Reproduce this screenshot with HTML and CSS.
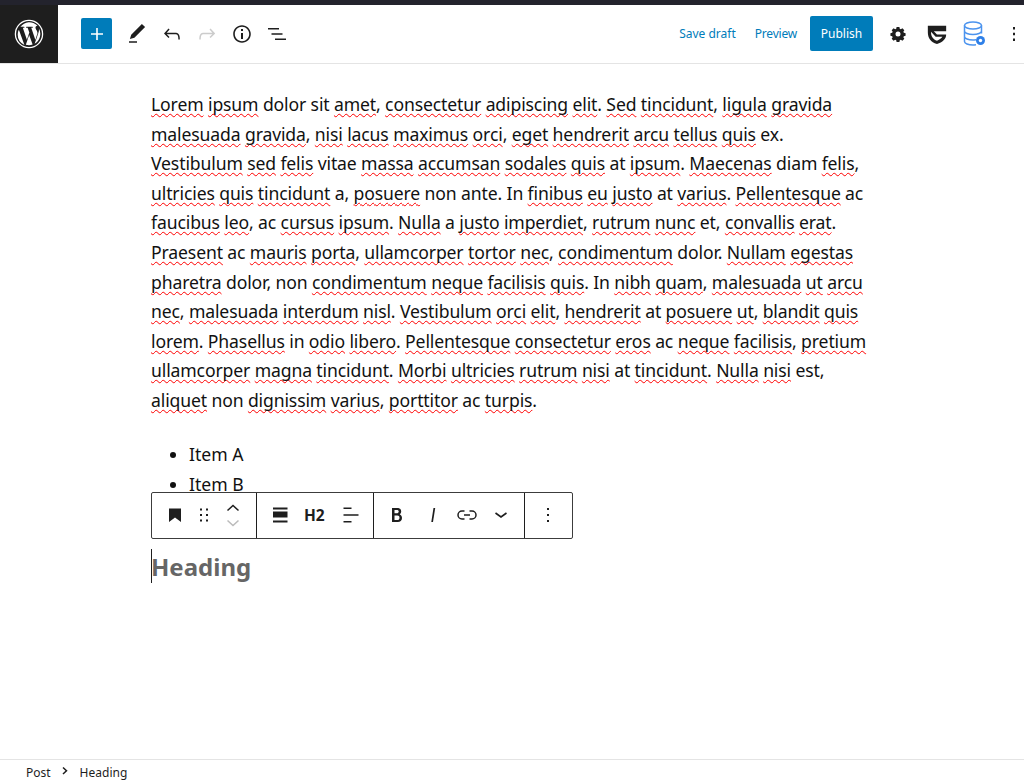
FILE: index.html
```html
<!DOCTYPE html>
<html lang="en">
<head>
<meta charset="utf-8">
<title>Edit Post</title>
<link rel="stylesheet" href="styles.css">
</head>
<body>
<div class="app">
  <div class="topstrip"></div>
  <header class="header">
    <div class="wp-logo">
      <svg width="30" height="30" viewBox="0 0 80 80"><path fill="#fff" d="M40 2a38 38 0 1 0 0 76 38 38 0 0 0 0-76zm0 3.500a34.500 34.500 0 1 1 0 69 34.500 34.500 0 0 1 0-69zM13 28.500 27.800 69A30 30 0 0 1 10 40c0-4 1-8 3-11.500zM62.500 38c0-3.500-1.300-6-2.400-7.900-1.400-2.400-2.800-4.400-2.800-6.800 0-2.700 2-5.100 4.900-5.100h.4A30 30 0 0 0 16.800 21l1.900-.1c3.100 0 8-.4 8-.4 1.600-.1 1.800 2.300.2 2.500l-3.400.3 10.900 32.200 6.500-19.500-4.600-12.700-3.200-.3c-1.600-.1-1.400-2.600.2-2.500 0 0 4.900.4 7.900.4 3.100 0 8-.4 8-.4 1.600-.1 1.800 2.300.2 2.500l-3.400.3L57 55.900l3-10c1.300-3.200 2.500-5.700 2.500-7.900zM40.500 42.400l-9 26.200a30 30 0 0 0 18.400-.5l-.2-.4zM66.400 25.300c.1 1 .2 2 .2 3.100 0 3-.6 6.400-2.300 10.700L55 65.900A30 30 0 0 0 66.400 25.300z"/></svg>
    </div>
    <div class="tools-left">
      <button class="add-btn" aria-label="Add block">
        <svg width="24" height="24" viewBox="0 0 24 24"><path fill="#fff" d="M18 11.200h-5.200V6h-1.600v5.200H6v1.600h5.200V18h1.600v-5.200H18z"/></svg>
      </button>
      <svg class="tool" width="24" height="24" viewBox="0 0 24 24"><path fill="#1e1e1e" d="M20.100 5.100 16.900 2 6.200 12.700l-1.300 4.400 4.500-1.300L20.100 5.100zM4 20.800h8v-1.500H4v1.500z"/></svg>
      <svg class="tool" width="24" height="24" viewBox="0 0 24 24"><path fill="#1e1e1e" d="M18.300 11.700c-.6-.6-1.400-.9-2.300-.9H6.700l2.900-3.300-1.100-1-4.500 5L8.500 16l1-1-2.700-2.700H16c.5 0 .9.200 1.300.5 1 1 1 3.400 1 4.500v.3h1.500v-.2c0-1.500 0-4.300-1.500-5.700z"/></svg>
      <svg class="tool" width="24" height="24" viewBox="0 0 24 24"><path fill="#ccc" d="M15.600 6.500l-1.100 1 2.900 3.300H8c-.9 0-1.700.3-2.300.9-1.400 1.500-1.400 4.200-1.400 5.600v.2h1.500v-.3c0-1.100 0-3.500 1-4.500.3-.3.700-.5 1.300-.5h9.200L14.500 15l1.100 1.100 4.600-4.600-4.600-5z"/></svg>
      <svg class="tool" width="24" height="24" viewBox="0 0 24 24"><path fill="#1e1e1e" d="M12 3.200c-4.800 0-8.800 3.900-8.800 8.800 0 4.800 3.900 8.800 8.800 8.800 4.800 0 8.800-3.900 8.800-8.800 0-4.800-4-8.800-8.800-8.800zm0 16c-4 0-7.200-3.300-7.200-7.200C4.800 8 8 4.800 12 4.800s7.200 3.300 7.200 7.200c0 4-3.200 7.200-7.200 7.200zM11 17h2v-6h-2v6zm0-8h2V7h-2v2z"/></svg>
      <svg class="tool" width="24" height="24" viewBox="0 0 24 24"><path fill="#1e1e1e" d="M3 6h11v1.500H3V6zm3.500 5.200h11v1.500h-11v-1.500zM10 16.500h11V18H10v-1.500z"/></svg>
    </div>
    <div class="tools-right">
      <a class="link save">Save draft</a>
      <a class="link preview">Preview</a>
      <button class="publish">Publish</button>
      <svg class="tool gear" width="20" height="20" viewBox="0 0 24 24"><path fill="#1e1e1e" fill-rule="evenodd" d="M10.300 4.500h3.400l.4 2.100 1.300.6 1.900-1.200 2.300 2.400-1.200 1.800.6 1.400 2.100.4v3.200l-2.100.4-.6 1.400 1.200 1.800-2.300 2.400-1.900-1.200-1.300.6-.4 2.100h-3.400l-.4-2.100-1.300-.6-1.900 1.200-2.300-2.400 1.200-1.800-.6-1.400-2.100-.4v-3.200l2.100-.4.600-1.400-1.200-1.800 2.300-2.400 1.900 1.200 1.300-.6zM12 10a3 3 0 1 0 0 6 3 3 0 0 0 0-6z" transform="translate(0 -1)"/></svg>
      <svg class="tool guard" width="22" height="22" viewBox="0 0 24 24"><path fill="#1e1e1e" d="M2 3h20v6H8.500l3.500 3.500h10c0 5-4 8.500-10 10.500C5 21 2 16 2 10V3zm3.500 3v4.500c0 3.800 2.300 7.300 6.500 8.800 3-1.100 5-2.800 5.900-4.300H10.500L5.500 9.500V6z"/></svg>
      <svg class="tool db" width="26" height="28" viewBox="0 0 26 28"><g fill="none" stroke="#4b93ee" stroke-width="1.500"><ellipse cx="11" cy="5.500" rx="8.500" ry="3.500"/><path d="M2.500 5.500v16c0 2 3.800 3.500 8.500 3.500 1 0 2-.1 3-.2M19.500 5.500v8M2.500 11c0 2 3.800 3.500 8.500 3.500s8.500-1.500 8.500-3.500M2.500 16.500c0 2 3.800 3.500 8.500 3.500 1 0 2-.1 3-.2"/></g><circle cx="18.500" cy="20.500" r="4.500" fill="#2f80e8"/><circle cx="18.500" cy="20.500" r="1.700" fill="#fff"/></svg>
      <svg class="tool more" width="20" height="24" viewBox="2 0 20 24"><path fill="#1e1e1e" d="M11 5h2v2.500h-2zM11 10.700h2v2.500h-2zM11 16.500h2V19h-2z"/></svg>
    </div>
  </header>

  <main class="canvas">
    <div class="column">
      <p class="para"><span class="sp">Lorem</span> <span class="sp">ipsum</span> dolor sit <span class="sp">amet</span>, <span class="sp">consectetur</span> <span class="sp">adipiscing</span> <span class="sp">elit</span>. <span class="sp">Sed</span> <span class="sp">tincidunt</span>, <span class="sp">ligula</span> <span class="sp">gravida</span><br>
<span class="sp">malesuada</span> <span class="sp">gravida</span>, <span class="sp">nisi</span> <span class="sp">lacus</span> <span class="sp">maximus</span> <span class="sp">orci</span>, <span class="sp">eget</span> <span class="sp">hendrerit</span> <span class="sp">arcu</span> <span class="sp">tellus</span> <span class="sp">quis</span> ex.<br>
<span class="sp">Vestibulum</span> <span class="sp">sed</span> <span class="sp">felis</span> vitae <span class="sp">massa</span> <span class="sp">accumsan</span> <span class="sp">sodales</span> <span class="sp">quis</span> at <span class="sp">ipsum</span>. <span class="sp">Maecenas</span> diam <span class="sp">felis</span>,<br>
<span class="sp">ultricies</span> <span class="sp">quis</span> <span class="sp">tincidunt</span> a, <span class="sp">posuere</span> non ante. In <span class="sp">finibus</span> <span class="sp">eu</span> <span class="sp">justo</span> at <span class="sp">varius</span>. <span class="sp">Pellentesque</span> ac<br>
<span class="sp">faucibus</span> <span class="sp">leo</span>, ac <span class="sp">cursus</span> <span class="sp">ipsum</span>. <span class="sp">Nulla</span> a <span class="sp">justo</span> <span class="sp">imperdiet</span>, <span class="sp">rutrum</span> <span class="sp">nunc</span> et, <span class="sp">convallis</span> <span class="sp">erat</span>.<br>
<span class="sp">Praesent</span> ac <span class="sp">mauris</span> <span class="sp">porta</span>, <span class="sp">ullamcorper</span> <span class="sp">tortor</span> <span class="sp">nec</span>, <span class="sp">condimentum</span> dolor. <span class="sp">Nullam</span> <span class="sp">egestas</span><br>
<span class="sp">pharetra</span> dolor, non <span class="sp">condimentum</span> <span class="sp">neque</span> <span class="sp">facilisis</span> <span class="sp">quis</span>. In <span class="sp">nibh</span> <span class="sp">quam</span>, <span class="sp">malesuada</span> <span class="sp">ut</span> <span class="sp">arcu</span><br>
<span class="sp">nec</span>, <span class="sp">malesuada</span> <span class="sp">interdum</span> <span class="sp">nisl</span>. <span class="sp">Vestibulum</span> <span class="sp">orci</span> <span class="sp">elit</span>, <span class="sp">hendrerit</span> at <span class="sp">posuere</span> <span class="sp">ut</span>, <span class="sp">blandit</span> <span class="sp">quis</span><br>
<span class="sp">lorem</span>. <span class="sp">Phasellus</span> in <span class="sp">odio</span> <span class="sp">libero</span>. <span class="sp">Pellentesque</span> <span class="sp">consectetur</span> <span class="sp">eros</span> ac <span class="sp">neque</span> <span class="sp">facilisis</span>, <span class="sp">pretium</span><br>
<span class="sp">ullamcorper</span> <span class="sp">magna</span> <span class="sp">tincidunt</span>. <span class="sp">Morbi</span> <span class="sp">ultricies</span> <span class="sp">rutrum</span> <span class="sp">nisi</span> at <span class="sp">tincidunt</span>. <span class="sp">Nulla</span> <span class="sp">nisi</span> est,<br>
<span class="sp">aliquet</span> non <span class="sp">dignissim</span> <span class="sp">varius</span>, <span class="sp">porttitor</span> ac <span class="sp">turpis</span>.</p>
      <ul class="list">
        <li>Item A</li>
        <li>Item B</li>
      </ul>
      <div class="block-wrap">
        <div class="block-toolbar">
          <div class="tb-group first">
            <svg class="tb-ic bookmark" width="24" height="24" viewBox="0 0 24 24"><path fill="#1e1e1e" d="M6 5.500h12V19l-6-4.500L6 19z"/></svg>
            <svg class="tb-ic drag" width="18" height="18" viewBox="0 0 18 18"><path fill="#1e1e1e" d="M5 2.500h2v2H5zM11 2.500h2v2h-2zM5 8h2v2H5zM11 8h2v2h-2zM5 13.500h2v2H5zM11 13.500h2v2h-2z"/></svg>
            <div class="movers">
              <svg width="24" height="12" viewBox="0 0 24 12"><path fill="none" stroke="#1e1e1e" stroke-width="1.500" d="M6.500 7.500 12 2.500l5.500 5"/></svg>
              <svg width="24" height="12" viewBox="0 0 24 12"><path fill="none" stroke="#bbb" stroke-width="1.500" d="M6.500 5.500 12 10.500l5.500-5"/></svg>
            </div>
          </div>
          <div class="tb-group second">
            <svg class="tb-ic" width="24" height="24" viewBox="0 0 24 24"><path fill="#1e1e1e" d="M4 4.500h14.500v2H4zM4 8.500h14.500v6H4zM4 17.500h14.500v2H4z"/></svg>
            <span class="h2-label">H2</span>
            <svg class="tb-ic align" width="24" height="24" viewBox="0 0 24 24"><path fill="#1e1e1e" d="M4.500 4.500h8V6h-8zM4.500 11.300h15v1.400h-15zM4.500 18h8v1.500h-8z"/></svg>
          </div>
          <div class="tb-group third">
            <svg class="tb-ic" width="24" height="24" viewBox="0 0 24 24"><path fill="#1e1e1e" d="M14.700 11.300c1-.6 1.500-1.600 1.500-3 0-2.300-1.700-3.300-4.300-3.300H7v14h5.800c2.400 0 4.200-1.300 4.200-3.900 0-1.700-.9-3.100-2.300-3.800zM9.500 7h2.300c1.200 0 1.900.5 1.900 1.500 0 1.200-.8 1.800-2 1.800H9.500V7zm2.800 10H9.500v-4.600h2.800c1.500 0 2.200.8 2.200 2.300 0 1.500-.9 2.300-2.200 2.300z"/></svg>
            <svg class="tb-ic italic" width="24" height="24" viewBox="0 0 24 24"><path fill="#1e1e1e" d="M12.500 5 10.300 19h1.700L14.200 5z"/></svg>
            <svg class="tb-ic" width="24" height="24" viewBox="0 0 24 24"><path fill="none" stroke="#1e1e1e" stroke-width="1.500" d="M9.500 8H7a4 4 0 0 0 0 8h2.500M14.500 8H17a4 4 0 0 1 0 8h-2.500M9 12h6"/></svg>
            <svg class="tb-ic" width="24" height="24" viewBox="0 0 24 24"><path fill="none" stroke="#1e1e1e" stroke-width="1.600" d="m6.500 10 5.500 4 5.500-4"/></svg>
          </div>
          <div class="tb-group fourth">
            <svg class="tb-ic" width="24" height="24" viewBox="0 0 24 24"><path fill="#1e1e1e" d="M11 5h2v2h-2zM11 11h2v2h-2zM11 17h2v2h-2z"/></svg>
          </div>
        </div>
        <h2 class="heading"><span class="caret"></span>Heading</h2>
      </div>
    </div>
  </main>

  <footer class="footer">
    <span class="crumb">Post</span>
    <svg class="crumb-sep" width="10" height="10" viewBox="0 0 10 10"><path fill="none" stroke="#1e1e1e" stroke-width="1.500" d="m3 1.500 3.500 3.200L3 8"/></svg>
    <span class="crumb">Heading</span>
  </footer>
</div>
</body>
</html>
```
FILE: styles.css
```css
* { box-sizing: border-box; }
html, body { margin: 0; padding: 0; height: 100%; }
body { background: #fff; color: #1e1e1e; font-family: "Noto Sans", "Open Sans", sans-serif; }
.app { display: flex; flex-direction: column; height: 782px; overflow: hidden; }
.topstrip { height: 5px; background: #23232d; flex: none; }
.header { display: flex; align-items: center; height: 59px; padding-bottom: 1px; flex: none; border-bottom: 1px solid #e4e4e4; }
.wp-logo { width: 58px; height: 58px; padding-bottom: 1px; background: #1e1e1e; display: flex; align-items: center; justify-content: center; flex: none; align-self: flex-start; }
.tools-left { display: flex; align-items: center; margin-left: 23px; gap: 11px; }
.add-btn { width: 31px; height: 31px; padding: 0; border: 0; border-radius: 2px; background: #007cba; display: flex; align-items: center; justify-content: center; margin-right: 2px; }
.tool { display: block; flex: none; }
.tools-right { display: flex; align-items: center; margin-left: auto; }
.link { font-size: 12px; color: #007cba; }
.save { margin-right: 19px; }
.preview { margin-right: 13px; letter-spacing: -.2px; }
.publish { width: 63px; height: 35px; border: 0; padding: 0; border-radius: 2px; background: #007cba; color: #fff; font: 12px "Noto Sans", sans-serif; }
.gear { margin-left: 15px; }
.guard { margin-left: 18px; }
.db { margin-left: 14px; }
.more { margin-left: 16px; }
.canvas { flex: 1; min-height: 0; }
.column { margin-left: 151px; padding-top: 26px; width: 730px; }
.para { margin: 0; font-size: 17.600px; letter-spacing: -.13px; line-height: 29.600px; white-space: nowrap; color: #111; }
.sp { text-decoration: underline wavy #f00 1.3px; text-underline-offset: 2px; text-decoration-skip-ink: none; }
.list { margin: 23.500px 0 0; padding: 0 0 0 38px; font-size: 17.600px; line-height: 30px; color: #111; }
.block-wrap { position: relative; height: 100px; }
.block-toolbar { position: absolute; left: 0; top: -7.500px; height: 47px; display: flex; background: #fff; border: 1px solid #3c3c3c; border-radius: 2px; }
.tb-group { display: flex; align-items: center; height: 100%; border-right: 1px solid #1e1e1e; }
.tb-group.first { width: 105px; padding-left: 11px; }
.tb-group.second { width: 117px; padding-left: 12px; gap: 10px; }
.tb-group.third { width: 151px; padding-left: 11px; gap: 10px; }
.tb-group.fourth { width: 47px; padding-left: 11px; border-right: 0; }
.tb-ic { display: block; flex: none; }
.drag { margin-left: 8px; }
.movers { display: flex; flex-direction: column; margin-left: 8px; }
.movers svg { display: block; }
.align { margin-left: 4px; }
.italic { margin-left: 2px; }
.h2-label { font-size: 15.500px; font-weight: 700; color: #1e1e1e; margin-left: 1px; }
.heading { position: absolute; left: 0; top: 49.500px; margin: 0; font-size: 24px; line-height: 36px; font-weight: 700; color: #666; }
.caret { position: absolute; left: 0; top: 0; width: 1px; height: 34px; background: #1e1e1e; }
.footer { flex: none; height: 23px; padding: 2px 0 0 26px; border-top: 1px solid #e4e4e4; display: flex; align-items: center; }
.crumb { font-size: 12px; color: #1e1e1e; }
.crumb-sep { margin: 0 10px 3px 9px; }
```
